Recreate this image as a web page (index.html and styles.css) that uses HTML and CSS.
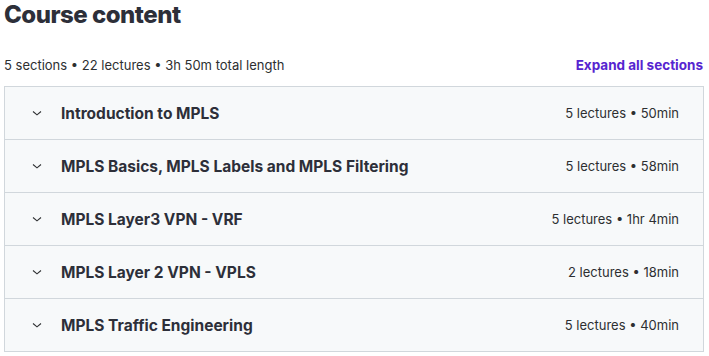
FILE: index.html
```html
<!DOCTYPE html>
<html lang="en">
<head>
  <meta charset="UTF-8">
  <title>Course content</title>
  <link rel="stylesheet" href="styles.css">
</head>
<body>
  <div class="curriculum">
    <h2 class="title">Course content</h2>

    <div class="summary">
      <span>5 sections • 22 lectures • 3h 50m total length</span>
      <a href="#" class="expand">Expand all sections</a>
    </div>

    <div class="sections">
      <div class="section">
        <svg class="chevron" viewBox="0 0 16 16"><polyline points="4,6.5 8,9.8 12,6.5"/></svg>
        <span class="section-title">Introduction to MPLS</span>
        <span class="section-meta">5 lectures • 50min</span>
      </div>
      <div class="section">
        <svg class="chevron" viewBox="0 0 16 16"><polyline points="4,6.5 8,9.8 12,6.5"/></svg>
        <span class="section-title">MPLS Basics, MPLS Labels and MPLS Filtering</span>
        <span class="section-meta">5 lectures • 58min</span>
      </div>
      <div class="section">
        <svg class="chevron" viewBox="0 0 16 16"><polyline points="4,6.5 8,9.8 12,6.5"/></svg>
        <span class="section-title">MPLS Layer3 VPN - VRF</span>
        <span class="section-meta">5 lectures • 1hr 4min</span>
      </div>
      <div class="section">
        <svg class="chevron" viewBox="0 0 16 16"><polyline points="4,6.5 8,9.8 12,6.5"/></svg>
        <span class="section-title">MPLS Layer 2 VPN - VPLS</span>
        <span class="section-meta">2 lectures • 18min</span>
      </div>
      <div class="section">
        <svg class="chevron" viewBox="0 0 16 16"><polyline points="4,6.5 8,9.8 12,6.5"/></svg>
        <span class="section-title">MPLS Traffic Engineering</span>
        <span class="section-meta">5 lectures • 40min</span>
      </div>
    </div>
  </div>
</body>
</html>
```

FILE: styles.css
```css
body {
  margin: 0;
  padding: 0;
  background-color: #fff;
  color: #2d2f31;
  font-family: Inter, "Noto Sans", sans-serif;
}

.curriculum {
  padding: 0 5px 0 4px;
}

.title {
  margin: 0;
  font-size: 24px;
  line-height: 30px;
  font-weight: 800;
  letter-spacing: -0.5px;
  color: #2d2f39;
}

.summary {
  display: flex;
  justify-content: space-between;
  align-items: center;
  height: 22px;
  margin: 24px 0 10px;
  font-size: 13px;
}

.expand {
  color: #5624d0;
  font-weight: 700;
  font-size: 13.5px;
  text-decoration: none;
  padding-right: 1px;
}

.sections {
  border: 1px solid #d1d7dc;
  background-color: #f7f9fa;
}

.section {
  display: flex;
  align-items: center;
  gap: 16px;
  height: 52px;
  padding: 0 24px;
  border-bottom: 1px solid #d1d7dc;
}

.section:last-child {
  border-bottom: none;
}

.chevron {
  width: 16px;
  height: 16px;
  flex-shrink: 0;
  fill: none;
  stroke: #2d2f31;
  stroke-width: 1.1;
}

.section-title {
  flex: 1;
  font-size: 15.5px;
  font-weight: 700;
  color: #2d2f39;
}

.section-meta {
  font-size: 13px;
}
```
